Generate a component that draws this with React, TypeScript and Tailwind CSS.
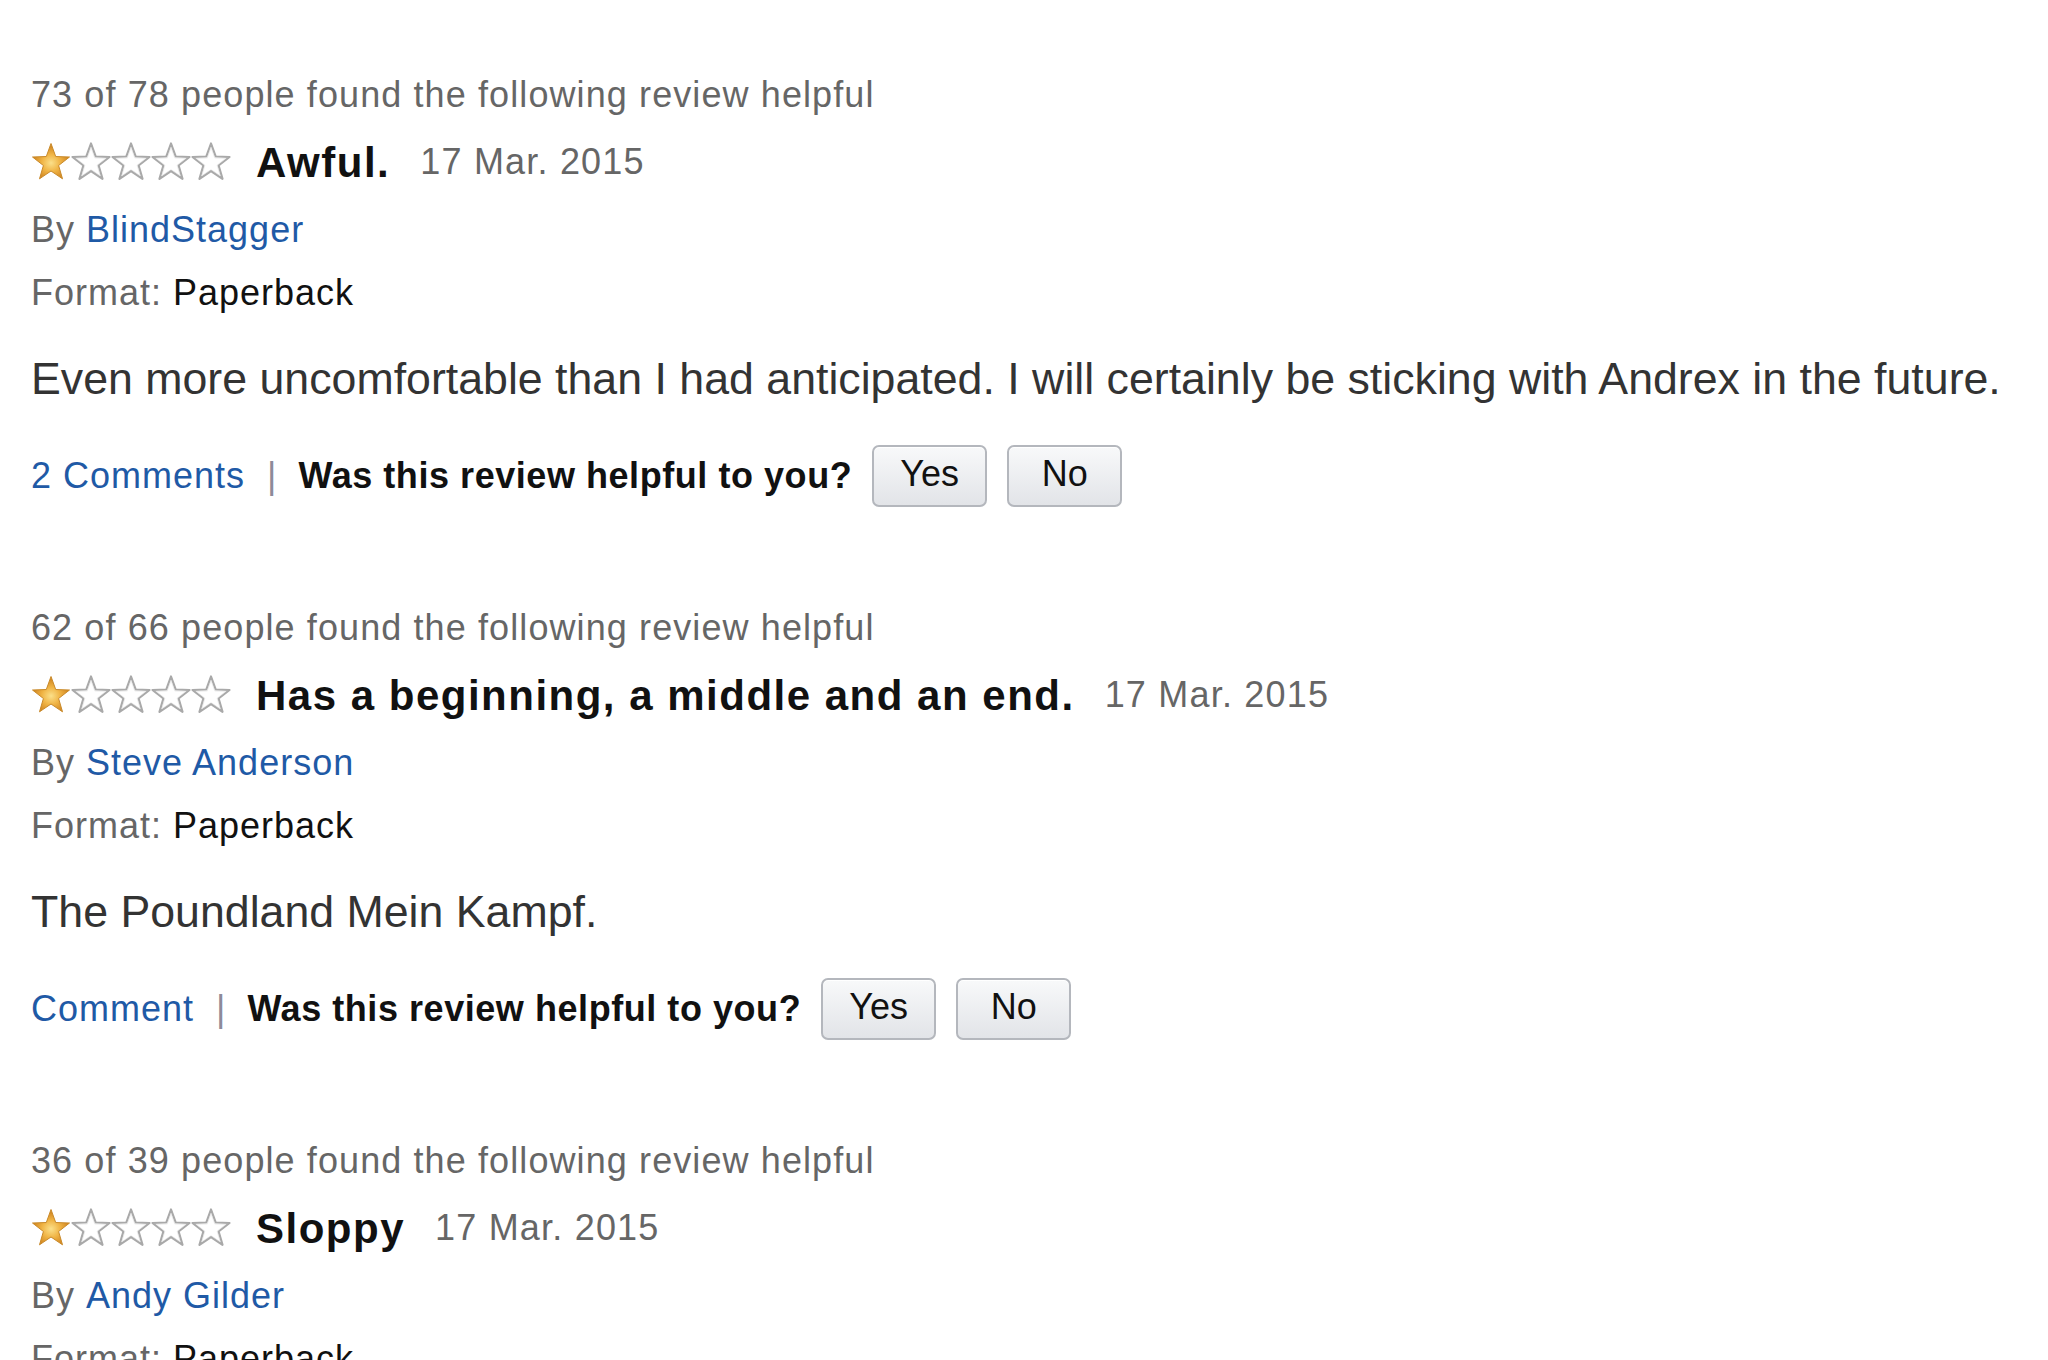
import React from "react";

type Review = {
    helpful: string;
    title: string;
    date: string;
    author: string;
    body?: string;
    comments?: string;
};

const reviews: Review[] = [
    {
        helpful: "73 of 78 people found the following review helpful",
        title: "Awful.",
        date: "17 Mar. 2015",
        author: "BlindStagger",
        body: "Even more uncomfortable than I had anticipated. I will certainly be sticking with Andrex in the future.",
        comments: "2 Comments",
    },
    {
        helpful: "62 of 66 people found the following review helpful",
        title: "Has a beginning, a middle and an end.",
        date: "17 Mar. 2015",
        author: "Steve Anderson",
        body: "The Poundland Mein Kampf.",
        comments: "Comment",
    },
    {
        helpful: "36 of 39 people found the following review helpful",
        title: "Sloppy",
        date: "17 Mar. 2015",
        author: "Andy Gilder",
    },
];

const STAR = "20,1.5 24.7,14.5 38.5,15 27.6,23.5 31.5,36.8 20,29 8.5,36.8 12.4,23.5 1.5,15 15.3,14.5";

const Stars = ({ rating }: { rating: number }) => (
    <svg width="200" height="40" viewBox="0 0 200 40" className="shrink-0">
        <defs>
            <radialGradient id="gold" cx="50%" cy="55%" r="55%">
                <stop offset="0%" stopColor="#fbe08a" />
                <stop offset="45%" stopColor="#f0b445" />
                <stop offset="100%" stopColor="#c97a17" />
            </radialGradient>
        </defs>
        {[0, 1, 2, 3, 4].map((i) => (
            <g key={i} transform={`translate(${i * 40} 0)`}>
                {i < rating ? (
                    <polygon points={STAR} fill="url(#gold)" stroke="#c98a2a" strokeWidth="1" strokeLinejoin="round" />
                ) : (
                    <>
                        <polygon points={STAR} fill="#fff" stroke="#a9a9a9" strokeWidth="2.2" strokeLinejoin="round" />
                        <polygon points={STAR} fill="none" stroke="#e2e2e2" strokeWidth="0.8" transform="translate(4 4.4) scale(0.8)" />
                    </>
                )}
            </g>
        ))}
    </svg>
);

const VoteButton = ({ label }: { label: string }) => (
    <button className="h-[62px] w-[115px] rounded-[7px] border-2 border-[#b4b7bd] bg-gradient-to-b from-[#f8f9fa] to-[#e2e4e8] pb-[6px] text-[36px] text-[#111] shadow-[inset_0_1px_0_#fff]">
        {label}
    </button>
);

const ReviewCard = ({ review }: { review: Review }) => (
    <div className="flex flex-col">
        <div className="flex h-[63px] items-center text-[36px] tracking-[1.1px] text-[#666]">{review.helpful}</div>
        <div className="flex h-[72px] items-center">
            <Stars rating={1} />
            <span className="ml-[25px] text-[42px] font-bold tracking-[1.5px] text-[#111]">{review.title}</span>
            <span className="ml-[30px] text-[36px] tracking-[1.2px] text-[#666]">{review.date}</span>
        </div>
        <div className="flex h-[63px] items-center text-[36px] tracking-[1px] text-[#666]">
            By&nbsp;<a className="text-[#1f5aa6]">{review.author}</a>
        </div>
        <div className="flex h-[63px] items-center text-[36px] tracking-[1px] text-[#666]">
            Format:&nbsp;<span className="text-[#111]">Paperback</span>
        </div>
        {review.body && (
            <>
                <p className="mt-[25px] flex h-[60px] items-center text-[44.7px] text-[#333]">{review.body}</p>
                <div className="mt-[36px] flex h-[62px] items-center">
                    <a className="text-[36px] tracking-[1px] text-[#1f5aa6]">{review.comments}</a>
                    <span className="mx-[22px] text-[36px] text-[#8e8a99]">|</span>
                    <span className="text-[36px] font-bold tracking-[0.55px] text-[#111]">
                        Was this review helpful to you?
                    </span>
                    <div className="ml-[20px] flex gap-[20px]">
                        <VoteButton label="Yes" />
                        <VoteButton label="No" />
                    </div>
                </div>
            </>
        )}
    </div>
);

export default function App() {
    return (
        <div
            className="flex h-screen flex-col gap-[89px] overflow-hidden whitespace-nowrap bg-white pl-[31px] pt-[63px]"
            style={{ fontFamily: '"Liberation Sans", Arial, sans-serif' }}
        >
            {reviews.map((review, i) => (
                <ReviewCard key={i} review={review} />
            ))}
        </div>
    );
}
